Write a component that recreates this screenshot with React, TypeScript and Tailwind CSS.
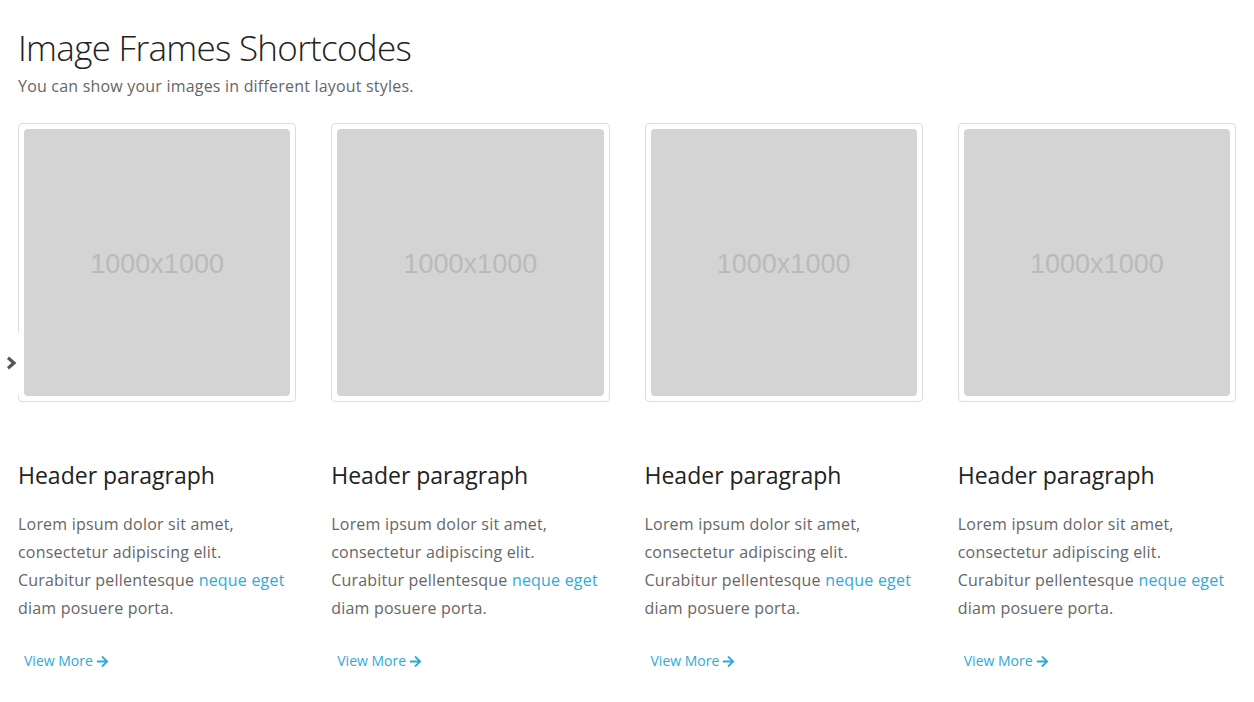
import React from "react";
import { FaArrowRight } from "react-icons/fa";

const Card = () => (
  <div className="flex flex-col">
    <div className="rounded-[4px] border border-[#dddddd] p-[5px] bg-white">
      <div className="flex h-[267px] items-center justify-center rounded-[4px] bg-[#d4d4d4]">
        <span className="mt-[3px] text-[27px] text-[#bababa]" style={{ fontFamily: '"Liberation Sans", Arial, sans-serif' }}>
          1000x1000
        </span>
      </div>
    </div>
    <h3 className="mt-[57px] text-[23px] leading-[32px] text-[#222]">Header paragraph</h3>
    <p className="mt-[19px] text-[16px] leading-[28px] tracking-[0.2px] text-[#666]">
      Lorem ipsum dolor sit amet,
      <br />
      consectetur adipiscing elit.
      <br />
      Curabitur pellentesque <span className="text-[#2eaad6]">neque eget</span>
      <br />
      diam posuere porta.
    </p>
    <a className="mt-[29px] ml-[6px] flex items-center gap-[3px] text-[14px] leading-[20px] text-[#2eaad6]">
      View More <FaArrowRight className="text-[13px]" />
    </a>
  </div>
);

export default function App() {
  return (
    <div className="relative min-h-[702px] bg-white px-[18px] pt-[24px]" style={{ fontFamily: '"Open Sans", sans-serif' }}>
      <h1 className="text-[35px] font-light leading-[48px] tracking-[-0.7px] text-[#222]">Image Frames Shortcodes</h1>
      <p className="mt-[2px] text-[16px] leading-[24px] tracking-[0.2px] text-[#666]">You can show your images in different layout styles.</p>
      <div className="mt-[25px] grid grid-cols-4 gap-x-[35px]">
        <Card />
        <Card />
        <Card />
        <Card />
      </div>
      <div className="absolute left-0 top-[333px] flex h-[62px] w-[23px] items-start justify-start bg-white">
        <svg width="11" height="14" viewBox="0 0 11 14" className="ml-[6px] mt-[23px]">
          <polyline points="2,1.8 8,7 2,12.2" fill="none" stroke="#555" strokeWidth="3.2" strokeLinejoin="miter" />
        </svg>
      </div>
    </div>
  );
}
